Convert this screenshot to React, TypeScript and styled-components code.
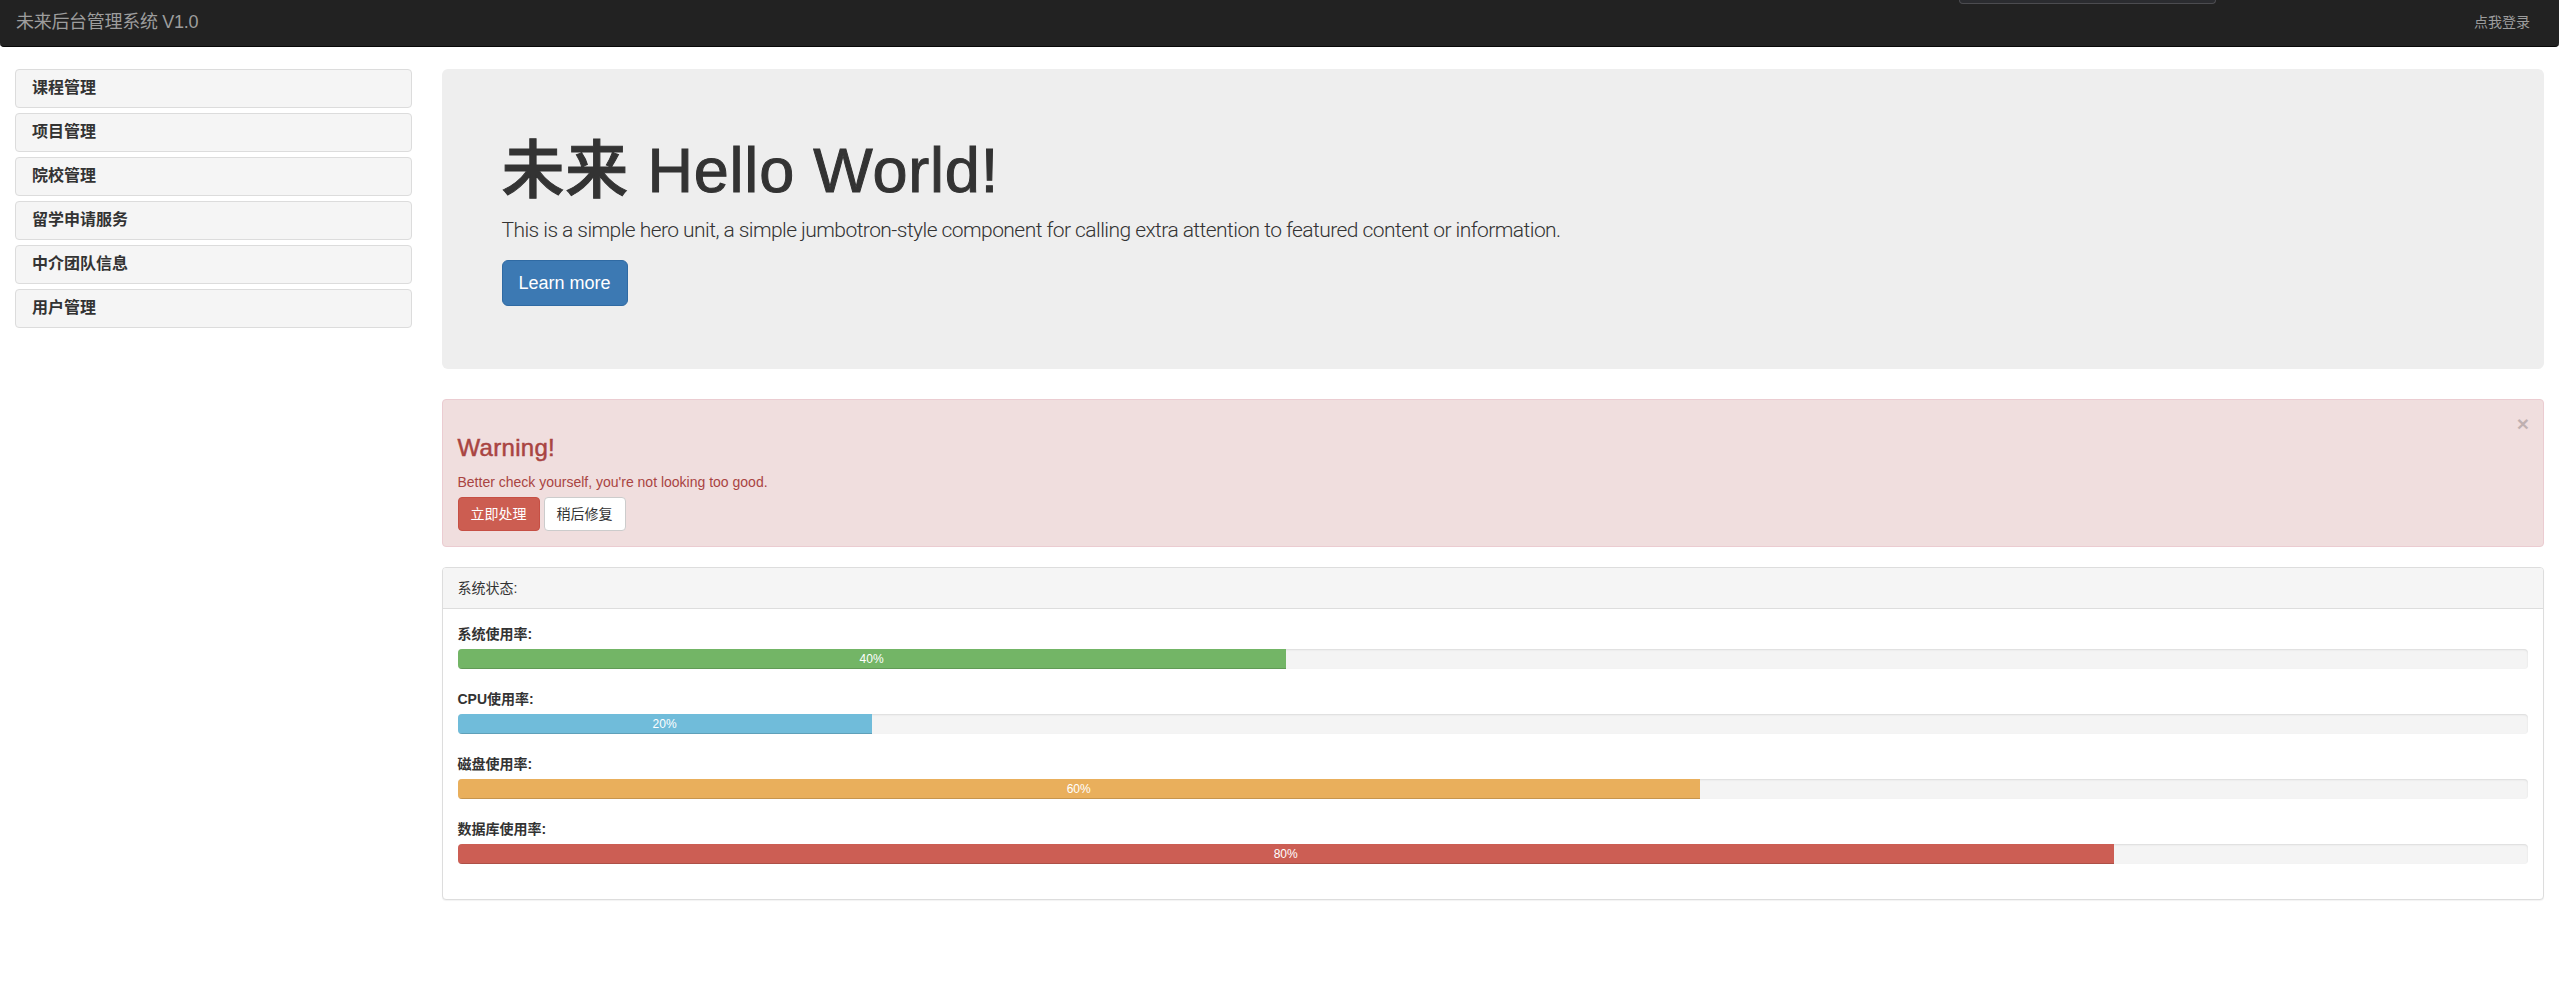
import React from "react";
import styled, { createGlobalStyle } from "styled-components";

const GlobalStyle = createGlobalStyle`
  * { box-sizing: border-box; }
  html, body { margin: 0; padding: 0; background: #fff; }
  body {
    font-family: "Liberation Sans", "Noto Sans CJK SC", sans-serif;
    font-size: 14px;
    line-height: 1.42857;
    color: #333;
  }
`;

const Navbar = styled.nav`
  position: relative;
  height: 47px;
  background: #222;
  border-bottom: 1px solid #080808;
  border-radius: 0 0 4px 4px;
  display: flex;
  align-items: center;
  justify-content: space-between;
  padding: 0 29px 0 16px;
  margin-bottom: 22px;
`;

const Brand = styled.a`
  font-size: 18px;
  color: #9d9d9d;
  text-decoration: none;
  line-height: 20px;
  margin-top: -2px;
  letter-spacing: -0.3px;
`;

const NavLink = styled.a`
  font-size: 14px;
  color: #9d9d9d;
  text-decoration: none;
  line-height: 20px;
  margin-top: -3px;
`;

const HangingMenu = styled.div`
  position: absolute;
  left: 1959px;
  top: 0;
  width: 257px;
  height: 4px;
  background: #2b2c30;
  border: 1px solid #4c4c50;
  border-top: none;
  border-radius: 0 0 4px 4px;
`;

const Layout = styled.div`
  display: grid;
  grid-template-columns: 2fr 10fr;
`;

const Column = styled.div`
  padding: 0 15px;
  min-width: 0;
`;

const SideList = styled.ul`
  list-style: none;
  margin: 0;
  padding: 0;
  display: flex;
  flex-direction: column;
  gap: 5px;
`;

const SideItem = styled.li`
  height: 39px;
  display: flex;
  align-items: center;
  padding: 0 16px;
  background: #f5f5f5;
  border: 1px solid #dcdcdc;
  border-radius: 4px;
  font-size: 16px;
  font-weight: 600;
  color: #333;
`;

const Jumbotron = styled.section`
  background: #eee;
  border-radius: 6px;
  padding: 47px 60px 48px;
  margin-bottom: 30px;
`;

const HeroTitle = styled.h1`
  margin: 20px 0 10px;
  font-size: 63px;
  line-height: 1.1;
  font-weight: 500;
  color: #333;
  letter-spacing: 0.8px;
  -webkit-text-stroke: 1px #333;
`;

const HeroText = styled.p`
  margin: 0 0 15px;
  font-family: Roboto, "Liberation Sans", "Noto Sans CJK SC", sans-serif;
  font-size: 21px;
  font-weight: 300;
  line-height: 30px;
  color: #333;
  letter-spacing: -0.56px;
`;

const HeroActions = styled.div`
  margin-bottom: 15px;
`;

const Button = styled.button<{ $variant: "primary" | "danger" | "default"; $size?: "lg" | "md" }>`
  display: inline-block;
  font-family: inherit;
  cursor: pointer;
  font-size: ${(p) => (p.$size === "lg" ? "18px" : "14px")};
  line-height: ${(p) => (p.$size === "lg" ? "24px" : "20px")};
  padding: ${(p) => (p.$size === "lg" ? "10px 16px" : "6px 12px")};
  border-radius: ${(p) => (p.$size === "lg" ? "6px" : "4px")};
  border: 1px solid
    ${(p) =>
      p.$variant === "primary" ? "#2f6aa3" : p.$variant === "danger" ? "#c64f44" : "#ccc"};
  background: ${(p) =>
    p.$variant === "primary" ? "#3c79b3" : p.$variant === "danger" ? "#cc5d51" : "#fff"};
  color: ${(p) => (p.$variant === "default" ? "#333" : "#fff")};
`;

const Alert = styled.div`
  position: relative;
  background: #f0dede;
  border: 1px solid #ebccd1;
  border-radius: 4px;
  padding: 15px 35px 15px 15px;
  margin-bottom: 20px;
  color: #a94442;
`;

const AlertTitle = styled.h3`
  margin: 20px 0 10px;
  font-size: 24px;
  line-height: 1.1;
  font-weight: 500;
  color: inherit;
  letter-spacing: 0.3px;
  -webkit-text-stroke: 0.5px #a94442;
`;

const AlertText = styled.p`
  margin: 0;
  font-size: 14px;
  line-height: 20px;
`;

const AlertActions = styled.div`
  margin-top: 5px;
  display: flex;
  gap: 4px;
`;

const CloseButton = styled.button`
  position: absolute;
  top: 13px;
  right: 14px;
  padding: 0;
  border: 0;
  background: transparent;
  font-family: "Liberation Sans", sans-serif;
  font-size: 21px;
  font-weight: bold;
  line-height: 1;
  color: #000;
  opacity: 0.2;
  cursor: pointer;
`;

const Panel = styled.section`
  background: #fff;
  border: 1px solid #ddd;
  border-radius: 4px;
  box-shadow: 0 1px 1px rgba(0, 0, 0, 0.05);
  margin-bottom: 20px;
`;

const PanelHeading = styled.div`
  padding: 10px 15px;
  background: #f5f5f5;
  border-bottom: 1px solid #ddd;
  border-radius: 3px 3px 0 0;
  font-size: 14px;
  line-height: 20px;
  color: #333;
`;

const PanelBody = styled.div`
  padding: 15px;
`;

const StatLabel = styled.div`
  font-weight: bold;
  font-size: 14px;
  line-height: 20px;
  margin-bottom: 5px;
  color: #333;
`;

const Progress = styled.div`
  height: 20px;
  margin-bottom: 20px;
  background: #f4f4f4;
  border-radius: 4px;
  box-shadow: inset 0 1px 2px rgba(0, 0, 0, 0.1);
  overflow: hidden;
`;

const barColors = {
  success: "#73b566",
  info: "#70bcda",
  warning: "#e9af5c",
  danger: "#cc5e54",
};

const ProgressBar = styled.div<{ $tone: keyof typeof barColors }>`
  height: 100%;
  background: ${(p) => barColors[p.$tone]};
  box-shadow: inset 0 -1px 0 rgba(0, 0, 0, 0.15);
  color: #fff;
  font-size: 12px;
  line-height: 20px;
  text-align: center;
`;

const menu = ["课程管理", "项目管理", "院校管理", "留学申请服务", "中介团队信息", "用户管理"];

const stats: { label: string; value: number; tone: keyof typeof barColors }[] = [
  { label: "系统使用率:", value: 40, tone: "success" },
  { label: "CPU使用率:", value: 20, tone: "info" },
  { label: "磁盘使用率:", value: 60, tone: "warning" },
  { label: "数据库使用率:", value: 80, tone: "danger" },
];

export default function App() {
  return (
    <>
      <GlobalStyle />
      <Navbar>
        <Brand href="#">未来后台管理系统 V1.0</Brand>
        <NavLink href="#">点我登录</NavLink>
        <HangingMenu />
      </Navbar>
      <Layout>
        <Column>
          <SideList>
            {menu.map((m) => (
              <SideItem key={m}>{m}</SideItem>
            ))}
          </SideList>
        </Column>
        <Column>
          <Jumbotron>
            <HeroTitle>未来 Hello World!</HeroTitle>
            <HeroText>
              This is a simple hero unit, a simple jumbotron-style component for calling extra attention to
              featured content or information.
            </HeroText>
            <HeroActions>
              <Button $variant="primary" $size="lg">Learn more</Button>
            </HeroActions>
          </Jumbotron>
          <Alert>
            <CloseButton aria-label="Close">×</CloseButton>
            <AlertTitle>Warning!</AlertTitle>
            <AlertText>Better check yourself, you're not looking too good.</AlertText>
            <AlertActions>
              <Button $variant="danger">立即处理</Button>
              <Button $variant="default">稍后修复</Button>
            </AlertActions>
          </Alert>
          <Panel>
            <PanelHeading>系统状态:</PanelHeading>
            <PanelBody>
              {stats.map((s) => (
                <div key={s.label}>
                  <StatLabel>{s.label}</StatLabel>
                  <Progress>
                    <ProgressBar $tone={s.tone} style={{ width: `${s.value}%` }}>
                      {s.value}%
                    </ProgressBar>
                  </Progress>
                </div>
              ))}
            </PanelBody>
          </Panel>
        </Column>
      </Layout>
    </>
  );
}
